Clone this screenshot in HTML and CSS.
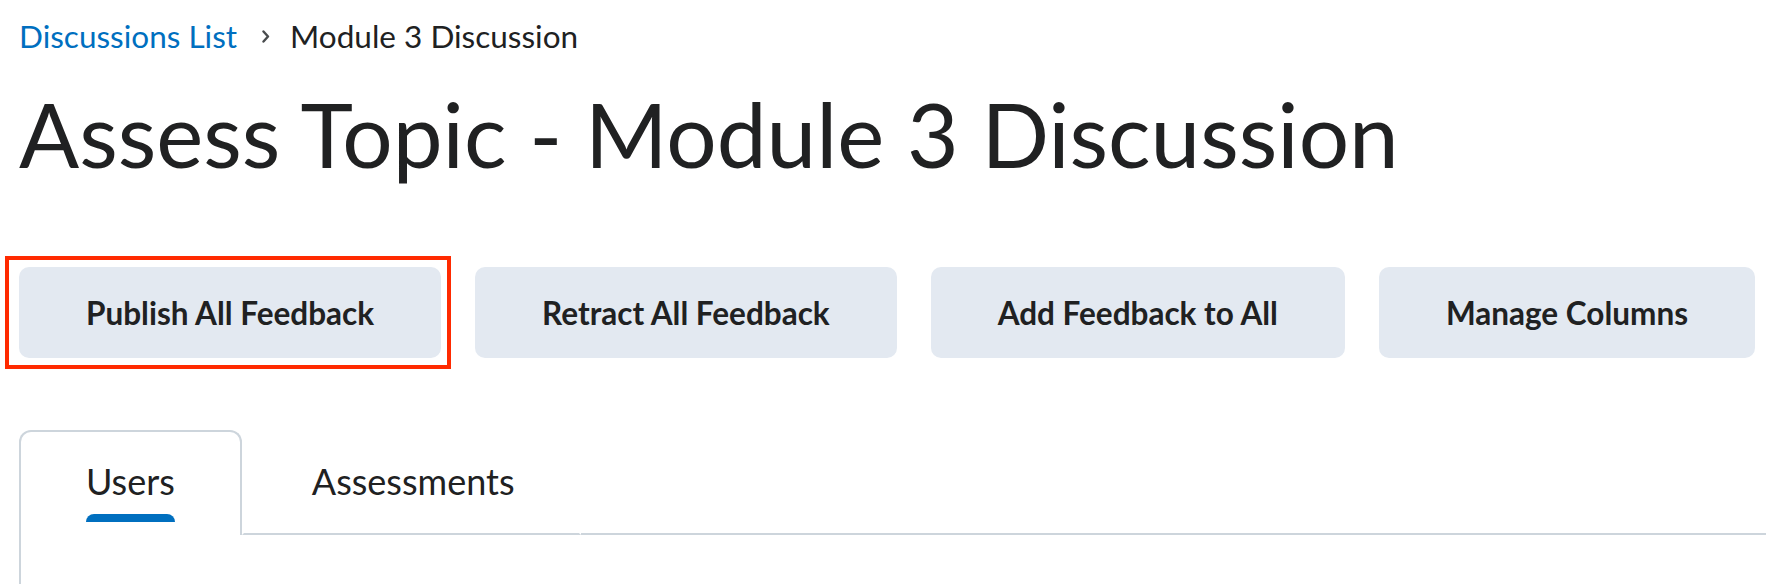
FILE: index.html
```html
<!DOCTYPE html>
<html lang="en">
<head>
<meta charset="utf-8">
<title>Assess Topic - Module 3 Discussion</title>
<link rel="stylesheet" href="styles.css">
</head>
<body>
<div class="page">
  <nav class="breadcrumbs">
    <a class="crumb-link" href="#">Discussions List</a>
    <svg class="crumb-sep" width="8" height="13" viewBox="0 0 8 13" aria-hidden="true"><path d="M1.5 1.5 L6 6.5 L1.5 11.5" fill="none" stroke="#494c4e" stroke-width="2.4" stroke-linecap="round" stroke-linejoin="round"/></svg>
    <span class="crumb-current">Module 3 Discussion</span>
  </nav>
  <h1 class="title">Assess Topic - Module 3 Discussion</h1>
  <div class="actions">
    <button class="btn btn-highlight">Publish All Feedback</button>
    <button class="btn">Retract All Feedback</button>
    <button class="btn">Add Feedback to All</button>
    <button class="btn">Manage Columns</button>
  </div>
  <div class="tabs">
    <div class="tab tab-active">
      <span class="tab-label">Users</span>
      <span class="tab-indicator"></span>
    </div>
    <div class="tab tab-inactive">
      <span class="tab-label">Assessments</span>
      <span class="tab-indicator tab-indicator-off"></span>
    </div>
    <div class="tab-rest"></div>
  </div>
  <div class="panel"></div>
</div>
</body>
</html>
```

FILE: styles.css
```css
html, body {
  margin: 0;
  padding: 0;
  background: #ffffff;
}
body {
  font-family: Lato, "Noto Sans", sans-serif;
  color: #202122;
  overflow: hidden;
}
.page {
  padding-left: 19px;
}
.breadcrumbs {
  display: flex;
  align-items: center;
  padding-top: 17px;
  font-size: 31.5px;
  line-height: 38px;
}
.crumb-link {
  color: #006fbf;
  text-decoration: none;
}
.crumb-sep {
  display: block;
  margin: 1px 20px 0 25px;
}
.crumb-current {
  color: #202122;
}
.title {
  margin: 25px 0 0 0;
  font-size: 89px;
  line-height: 108px;
  font-weight: 400;
  letter-spacing: 0;
}
.actions {
  display: flex;
  gap: 34px;
  margin-top: 79px;
}
.btn {
  position: relative;
  height: 91px;
  padding: 0 67px;
  border: none;
  border-radius: 10px;
  background: #e3e9f1;
  color: #202122;
  font-family: Lato, "Noto Sans", sans-serif;
  font-weight: 700;
  font-size: 31.5px;
}
.btn-highlight::after {
  content: "";
  position: absolute;
  top: -11px;
  left: -14px;
  right: -10px;
  bottom: -11px;
  border: 4px solid #ff2a00;
  pointer-events: none;
}
.tabs {
  display: flex;
  margin-top: 72px;
}
.tab {
  display: flex;
  flex-direction: column;
  align-items: center;
  padding: 28px 65px 0;
  border: 2px solid transparent;
  border-bottom: none;
  border-radius: 12px 12px 0 0;
  font-size: 36px;
  line-height: 43px;
}
.tab-inactive {
  padding-left: 68px;
  border-bottom: 2px solid #cdd5dc;
  border-radius: 0;
}
.tab-inactive .tab-indicator {
  margin-bottom: 11px;
}
.tab-active {
  border-color: #cdd5dc;
}
.tab-indicator {
  align-self: stretch;
  height: 8px;
  margin-top: 11px;
  margin-bottom: 13px;
  border-radius: 8px 8px 0 0;
  background: #006fbf;
}
.tab-indicator-off {
  background: transparent;
}
.tab-rest {
  flex: 1;
  border-bottom: 2px solid #cdd5dc;
}
.panel {
  height: 60px;
  border-left: 2px solid #cdd5dc;
}
```
